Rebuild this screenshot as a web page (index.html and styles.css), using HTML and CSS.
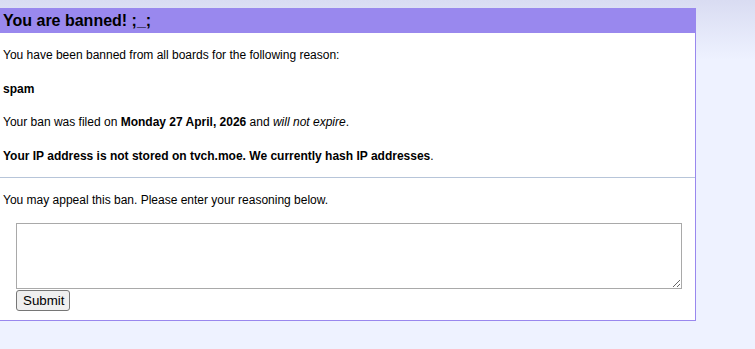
FILE: index.html
```html
<!DOCTYPE html>
<html lang="en">
<head>
    <meta charset="UTF-8">
    <title>Banned!</title>
    <link rel="stylesheet" href="styles.css">
</head>
<body>
    <div class="ban">
        <h2>You are banned! ;_;</h2>
        <p>You have been banned from all boards for the following reason:</p>
        <p class="reason">spam</p>
        <p>Your ban was filed on <strong>Monday 27 April, 2026</strong> and <em>will not expire</em>.</p>
        <p class="last"><strong>Your IP address is not stored on tvch.moe. We currently hash IP addresses</strong>.</p>
        <hr>
        <p class="appeal-note">You may appeal this ban. Please enter your reasoning below.</p>
        <form class="appeal" action="" method="post">
            <textarea name="reason" rows="4"></textarea>
            <input type="submit" value="Submit">
        </form>
    </div>
</body>
</html>
```

FILE: styles.css
```css
body {
    font-family: "Liberation Sans", Arial, sans-serif;
    font-size: 12px;
    color: #000000;
    margin: 8px 0 0 0;
    background: #eef2ff linear-gradient(#d9dcf2, #eef2ff 60px);
    min-height: 341px;
}

.ban {
    width: 696px;
    box-sizing: border-box;
    background-color: #ffffff;
    border-right: 1px solid #9988ee;
    border-bottom: 1px solid #9988ee;
}

.ban h2 {
    margin: 0;
    background-color: #9988ee;
    font-size: 16px;
    line-height: 25px;
    height: 25px;
    padding: 0 3px;
}

.ban p {
    margin: 15px 3px 19px 3px;
    line-height: 14.5px;
}

.ban p.last {
    margin-bottom: 14px;
}

.ban p.appeal-note {
    margin-bottom: 15px;
}

.ban p.reason {
    font-weight: bold;
}

.ban hr {
    border: none;
    border-top: 1px solid #b7c5d9;
    margin: 0;
}

.appeal {
    padding: 0 13px 9px 16px;
}

.appeal textarea {
    display: block;
    width: 666px;
    height: 66px;
    box-sizing: border-box;
    border: 1px solid #a9a9a9;
    margin: 0;
    resize: both;
}

.appeal input[type="submit"] {
    font-family: "Liberation Sans", Arial, sans-serif;
    font-size: 13.33px;
    height: 21px;
    margin: 1px 0 0 0;
    padding: 1px 5px 1px 6px;
    border: 1px solid #767676;
    border-radius: 3px;
    background-color: #efefef;
}
```
